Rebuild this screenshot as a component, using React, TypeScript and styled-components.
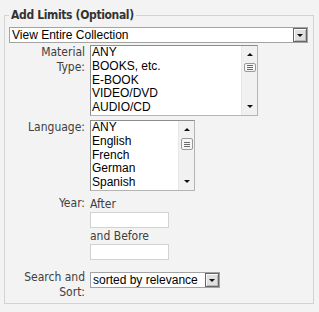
import styled, { createGlobalStyle } from "styled-components";

const GlobalStyle = createGlobalStyle`
  html, body {
    margin: 0;
    padding: 0;
    background: #f3f3f3;
  }
  body {
    width: 319px;
    height: 312px;
    overflow: hidden;
    font-family: "DejaVu Sans Condensed", "DejaVu Sans", sans-serif;
    font-size: 12px;
    color: #383838;
  }
`;

const Fieldset = styled.fieldset`
  margin: 8px 5px 0 4px;
  padding: 5px 5px 3px 4px;
  border: 1px solid #d3d3d3;
  min-width: 0;
`;

const Legend = styled.legend`
  padding: 0 2px;
  font-weight: bold;
  font-size: 12px;
  line-height: 14px;
  letter-spacing: -0.35px;
  color: #333;
`;

const Dropdown = styled.div<{ $width?: number; $top?: number }>`
  display: flex;
  align-items: center;
  box-sizing: border-box;
  width: ${(p) => (p.$width ? `${p.$width}px` : "100%")};
  height: 16px;
  margin-top: ${(p) => p.$top ?? 0}px;
  border: 1px solid #a3a3a3;
  background: #fff;
  font-family: "Liberation Sans", Arial, sans-serif;
  font-size: 12px;
  color: #000;
`;

const DropdownText = styled.span`
  flex: 1;
  padding-left: 2px;
  white-space: nowrap;
  line-height: 14px;
`;

const DropButton = styled.span`
  display: flex;
  align-items: center;
  justify-content: center;
  box-sizing: border-box;
  width: 14px;
  height: 14px;
  border: 1px solid #666;
  background: #e0e0e0;
  box-shadow: inset 1px 1px 0 #fafafa, inset -1px -1px 0 #b8b8b8;
`;

const Arrow = styled.span<{ $up?: boolean }>`
  width: 0;
  height: 0;
  border-left: 3px solid transparent;
  border-right: 3px solid transparent;
  ${(p) =>
    p.$up ? "border-bottom: 3px solid #111;" : "border-top: 3px solid #111;"}
`;

const Field = styled.div<{ $gap: number }>`
  display: grid;
  grid-template-columns: 76px auto;
  column-gap: 5px;
  margin-top: ${(p) => p.$gap}px;
`;

const Label = styled.div`
  text-align: right;
  line-height: 15px;
  color: #404040;
`;

const Control = styled.div`
  display: flex;
  flex-direction: column;
  align-items: flex-start;
`;

const ListBox = styled.div<{ $width: number }>`
  display: flex;
  box-sizing: border-box;
  width: ${(p) => p.$width}px;
  height: 71px;
  border: 1px solid #8d8d8d;
  border-right-color: #b4b4b4;
  border-bottom-color: #b4b4b4;
  background: #fff;
`;

const Options = styled.div`
  flex: 1;
  overflow: hidden;
  padding-left: 1px;
  font-family: "Liberation Sans", Arial, sans-serif;
  font-size: 12px;
  line-height: 13.8px;
  color: #000;
  white-space: nowrap;
`;

const ScrollTrack = styled.div`
  display: flex;
  flex-direction: column;
  align-items: center;
  width: 15px;
  background: #f1f1f1;
  border-left: 1px solid #e6e6e6;
`;

const ScrollArrow = styled.div`
  display: flex;
  align-items: center;
  justify-content: center;
  height: 17px;
  width: 100%;
`;

const Thumb = styled.div<{ $height: number }>`
  display: flex;
  flex-direction: column;
  align-items: center;
  justify-content: center;
  gap: 1px;
  box-sizing: border-box;
  width: 12px;
  height: ${(p) => p.$height}px;
  border: 1px solid #9a9a9a;
  border-radius: 2px;
  background: #f6f6f6;
`;

const Grip = styled.span`
  width: 6px;
  height: 1px;
  background: #6a6a6a;
`;

const Spacer = styled.div`
  flex: 1;
`;

const TextLine = styled.div`
  line-height: 16px;
  color: #404040;
`;

const TextInput = styled.div`
  box-sizing: border-box;
  width: 79px;
  height: 16px;
  border: 1px solid #d2d2d2;
  background: #fff;
`;

function Listbox({
  width,
  items,
  thumb,
}: {
  width: number;
  items: string[];
  thumb: number;
}) {
  return (
    <ListBox $width={width}>
      <Options>
        {items.map((item) => (
          <div key={item}>{item}</div>
        ))}
      </Options>
      <ScrollTrack>
        <ScrollArrow>
          <Arrow $up />
        </ScrollArrow>
        <Thumb $height={thumb}>
          <Grip />
          <Grip />
          <Grip />
        </Thumb>
        <Spacer />
        <ScrollArrow>
          <Arrow />
        </ScrollArrow>
      </ScrollTrack>
    </ListBox>
  );
}

export default function App() {
  return (
    <>
      <GlobalStyle />
      <Fieldset>
        <Legend>Add Limits (Optional)</Legend>
        <Dropdown>
          <DropdownText>View Entire Collection</DropdownText>
          <DropButton>
            <Arrow />
          </DropButton>
        </Dropdown>

        <Field $gap={2}>
          <Label>
            Material
            <br />
            Type:
          </Label>
          <Control>
            <Listbox
              width={168}
              thumb={9}
              items={["ANY", "BOOKS, etc.", "E-BOOK", "VIDEO/DVD", "AUDIO/CD"]}
            />
          </Control>
        </Field>

        <Field $gap={4}>
          <Label>Language:</Label>
          <Control>
            <Listbox
              width={105}
              thumb={12}
              items={["ANY", "English", "French", "German", "Spanish"]}
            />
          </Control>
        </Field>

        <Field $gap={5}>
          <Label>Year:</Label>
          <Control>
            <TextLine>After</TextLine>
            <TextInput />
            <TextLine>and Before</TextLine>
            <TextInput />
          </Control>
        </Field>

        <Field $gap={10}>
          <Label>
            Search and
            <br />
            Sort:
          </Label>
          <Control>
            <Dropdown $width={130} $top={2}>
              <DropdownText>sorted by relevance</DropdownText>
              <DropButton>
                <Arrow />
              </DropButton>
            </Dropdown>
          </Control>
        </Field>
      </Fieldset>
    </>
  );
}
